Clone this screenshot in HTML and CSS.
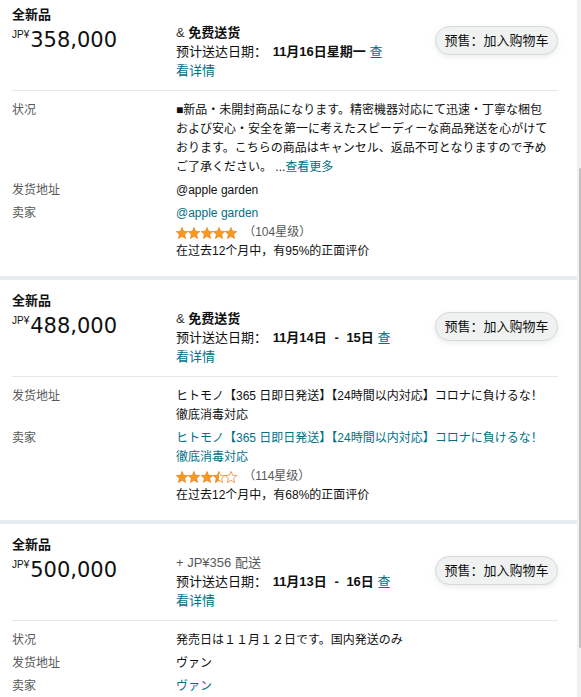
FILE: index.html
```html
<!DOCTYPE html>
<html lang="zh">
<head>
<meta charset="utf-8">
<title>报价</title>
<link rel="stylesheet" href="styles.css">
</head>
<body>
<svg class="defs" width="0" height="0" aria-hidden="true">
  <defs>
    <polygon id="star" points="6,0.4 7.6,4.2 11.8,4.55 8.65,7.3 9.6,11.5 6,9.3 2.4,11.5 3.35,7.3 0.2,4.55 4.4,4.2"/>
    <linearGradient id="half" x1="0" x2="1" y1="0" y2="0">
      <stop offset="50%" stop-color="#f8981d"/>
      <stop offset="50%" stop-color="#ffffff"/>
    </linearGradient>
  </defs>
</svg>
<div class="page">
  <div class="content">

    <section class="offer">
      <div class="offer-top">
        <div class="price-col">
          <div class="cond">全新品</div>
          <div class="price"><span class="cur">JP¥</span>358,000</div>
        </div>
        <div class="ship-col">
          <div><span class="amp">&amp;</span> <b>免费送货</b></div>
          <div>预计送达日期： <b class="date">11月16日星期一</b> <a class="link">查看详情</a></div>
        </div>
        <div class="btn-col"><span class="btn">预售：加入购物车</span></div>
      </div>
      <div class="details">
        <div class="label">状况</div>
        <div class="value">■新品・未開封商品になります。精密機器対応にて迅速・丁寧な梱包および安心・安全を第一に考えたスピーディーな商品発送を心がけております。こちらの商品はキャンセル、返品不可となりますので予めご了承ください。 ...<a class="link">查看更多</a></div>
        <div class="label">发货地址</div>
        <div class="value">@apple garden</div>
        <div class="label">卖家</div>
        <div class="value">
          <a class="link">@apple garden</a>
          <div class="rating">
            <span class="stars">
              <svg viewBox="0 0 12 12"><use href="#star" class="s-full"/></svg><svg viewBox="0 0 12 12"><use href="#star" class="s-full"/></svg><svg viewBox="0 0 12 12"><use href="#star" class="s-full"/></svg><svg viewBox="0 0 12 12"><use href="#star" class="s-full"/></svg><svg viewBox="0 0 12 12"><use href="#star" class="s-full"/></svg>
            </span>
            <span class="count">（104星级）</span>
          </div>
          <div>在过去12个月中，有95%的正面评价</div>
        </div>
      </div>
    </section>

    <section class="offer">
      <div class="offer-top">
        <div class="price-col">
          <div class="cond">全新品</div>
          <div class="price"><span class="cur">JP¥</span>488,000</div>
        </div>
        <div class="ship-col">
          <div><span class="amp">&amp;</span> <b>免费送货</b></div>
          <div>预计送达日期： <b class="date range">11月14日 - 15日</b> <a class="link">查看详情</a></div>
        </div>
        <div class="btn-col"><span class="btn">预售：加入购物车</span></div>
      </div>
      <div class="details">
        <div class="label">发货地址</div>
        <div class="value">ヒトモノ【365 日即日発送】【24時間以内対応】コロナに負けるな！徹底消毒対応</div>
        <div class="label">卖家</div>
        <div class="value">
          <a class="link">ヒトモノ【365 日即日発送】【24時間以内対応】コロナに負けるな！徹底消毒対応</a>
          <div class="rating">
            <span class="stars">
              <svg viewBox="0 0 12 12"><use href="#star" class="s-full"/></svg><svg viewBox="0 0 12 12"><use href="#star" class="s-full"/></svg><svg viewBox="0 0 12 12"><use href="#star" class="s-full"/></svg><svg viewBox="0 0 12 12"><use href="#star" class="s-half"/></svg><svg viewBox="0 0 12 12"><use href="#star" class="s-empty"/></svg>
            </span>
            <span class="count">（114星级）</span>
          </div>
          <div>在过去12个月中，有68%的正面评价</div>
        </div>
      </div>
    </section>

    <section class="offer">
      <div class="offer-top">
        <div class="price-col">
          <div class="cond">全新品</div>
          <div class="price"><span class="cur">JP¥</span>500,000</div>
        </div>
        <div class="ship-col">
          <div class="muted">+ JP¥356 配送</div>
          <div>预计送达日期： <b class="date range">11月13日 - 16日</b> <a class="link">查看详情</a></div>
        </div>
        <div class="btn-col"><span class="btn">预售：加入购物车</span></div>
      </div>
      <div class="details">
        <div class="label">状况</div>
        <div class="value">発売日は１１月１２日です。国内発送のみ</div>
        <div class="label">发货地址</div>
        <div class="value">ヴァン</div>
        <div class="label">卖家</div>
        <div class="value"><a class="link">ヴァン</a></div>
      </div>
    </section>

  </div>
  <div class="scrollbar"><div class="thumb"></div></div>
</div>
</body>
</html>
```

FILE: styles.css
```css
html, body {
  margin: 0;
  padding: 0;
  height: 100%;
  overflow: hidden;
  background: #ffffff;
}

body {
  font-family: "Liberation Sans", "Noto Sans CJK SC", "Noto Sans CJK JP", sans-serif;
  font-size: 13px;
  line-height: 19px;
  color: #0f1111;
}

.defs {
  position: absolute;
  width: 0;
  height: 0;
}

.page {
  display: flex;
  height: 697px;
  overflow: hidden;
}

.content {
  width: 577px;
  flex: none;
}

.scrollbar {
  flex: 1;
  background: #f1f1f1;
  padding-top: 168px;
}

.thumb {
  width: 2px;
  height: 480px;
  margin-left: 2px;
  background: #c1c1c1;
  border-radius: 1px;
}

.offer {
  padding: 11px 19px 15px 12px;
  background: #ffffff;
}

.offer:first-child {
  padding-top: 5px;
}

.offer + .offer {
  border-top: 4px solid #e7ecee;
}

.offer-top {
  display: grid;
  grid-template-columns: 164px 216px 1fr;
  padding-bottom: 10px;
  border-bottom: 1px solid #e7e7e7;
}

.cond {
  font-weight: bold;
}

.price {
  font-family: "DejaVu Sans", "Liberation Sans", sans-serif;
  font-size: 21px;
  line-height: 32px;
  color: #0f1111;
}

.cur {
  font-family: "Liberation Sans", sans-serif;
  font-size: 10px;
  line-height: 10px;
  vertical-align: 9px;
  margin-right: 1px;
}

.ship-col {
  margin-top: 18px;
}

.amp {
  color: #333333;
}

.muted {
  color: #565959;
}

.date {
  margin-left: 2px;
}

.range {
  word-spacing: 4px;
}

.link {
  color: #007185;
  text-decoration: none;
  cursor: pointer;
}

.btn-col {
  display: flex;
  justify-content: flex-end;
  align-items: flex-start;
  padding-top: 21px;
}

.btn {
  display: flex;
  align-items: center;
  justify-content: center;
  box-sizing: border-box;
  width: 123px;
  height: 29px;
  border: 1px solid #d5d9d9;
  border-radius: 15px;
  background: #f0f2f2;
  box-shadow: 0 2px 5px rgba(213, 217, 217, 0.5);
  font-size: 13px;
  color: #0f1111;
}

.details {
  display: grid;
  grid-template-columns: 164px 375px;
  row-gap: 4px;
  padding-top: 10px;
  font-size: 12px;
  line-height: 19px;
}

.label {
  color: #565959;
}

.value {
  color: #0f1111;
}

.rating {
  display: flex;
  align-items: center;
  height: 19px;
}

.stars {
  display: flex;
  gap: 0.3px;
}

.stars svg {
  width: 12px;
  height: 12px;
  display: block;
}

.s-full {
  fill: #f8981d;
  stroke: #e47911;
  stroke-width: 0.6;
}

.s-half {
  fill: url(#half);
  stroke: #e47911;
  stroke-width: 0.7;
}

.s-empty {
  fill: #ffffff;
  stroke: #e47911;
  stroke-width: 0.7;
}

.count {
  color: #565959;
  margin-left: 6px;
}
```
